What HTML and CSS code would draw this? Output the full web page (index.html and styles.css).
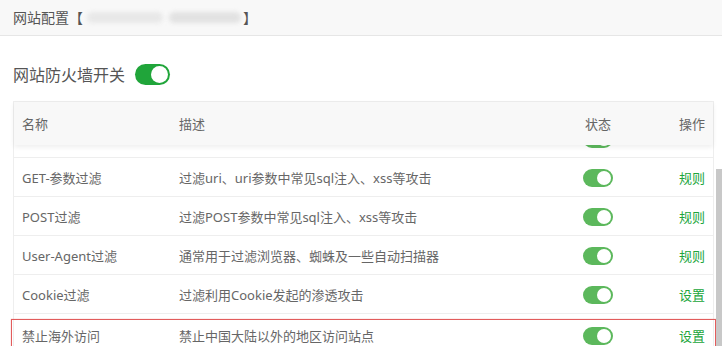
FILE: index.html
```html
<!DOCTYPE html>
<html lang="zh-CN">
<head>
<meta charset="utf-8">
<title>网站配置</title>
<link rel="stylesheet" href="styles.css">
</head>
<body>
<div class="titlebar">
  <span class="title">网站配置【</span><span class="blur"><span class="blob b1"></span><span class="blob b2"></span></span><span class="title">】</span>
</div>
<div class="content">
  <div class="master">
    <span class="master-label">网站防火墙开关</span>
    <span class="switch big"><span class="knob"></span></span>
  </div>
  <div class="tablewrap">
    <div class="table">
      <div class="thead row">
        <div class="c name">名称</div>
        <div class="c desc">描述</div>
        <div class="c status">状态</div>
        <div class="c op">操作</div>
      </div>
      <div class="tbody">
        <div class="row tr first">
          <div class="c name"></div>
          <div class="c desc"></div>
          <div class="c status"><span class="switch"><span class="knob"></span></span></div>
          <div class="c op"></div>
        </div>
        <div class="row tr">
          <div class="c name">GET-参数过滤</div>
          <div class="c desc">过滤uri、uri参数中常见sql注入、xss等攻击</div>
          <div class="c status"><span class="switch"><span class="knob"></span></span></div>
          <div class="c op"><a class="link">规则</a></div>
        </div>
        <div class="row tr">
          <div class="c name">POST过滤</div>
          <div class="c desc">过滤POST参数中常见sql注入、xss等攻击</div>
          <div class="c status"><span class="switch"><span class="knob"></span></span></div>
          <div class="c op"><a class="link">规则</a></div>
        </div>
        <div class="row tr">
          <div class="c name">User-Agent过滤</div>
          <div class="c desc">通常用于过滤浏览器、蜘蛛及一些自动扫描器</div>
          <div class="c status"><span class="switch"><span class="knob"></span></span></div>
          <div class="c op"><a class="link">规则</a></div>
        </div>
        <div class="row tr">
          <div class="c name">Cookie过滤</div>
          <div class="c desc">过滤利用Cookie发起的渗透攻击</div>
          <div class="c status"><span class="switch"><span class="knob"></span></span></div>
          <div class="c op"><a class="link">设置</a></div>
        </div>
        <div class="row tr hl">
          <div class="c name">禁止海外访问</div>
          <div class="c desc">禁止中国大陆以外的地区访问站点</div>
          <div class="c status"><span class="switch"><span class="knob"></span></span></div>
          <div class="c op"><a class="link">设置</a></div>
        </div>
      </div>
    </div>
    <div class="scrollbar"><div class="thumb"></div></div>
  </div>
</div>
</body>
</html>
```
FILE: styles.css
```css
html, body {
  margin: 0;
  padding: 0;
  height: 100%;
  overflow: hidden;
  background: #fff;
}
body {
  font-family: "Noto Sans", "Noto Sans CJK SC", sans-serif;
  color: #666;
  font-size: 13px;
}
.titlebar {
  height: 36px;
  background: #f8f8f8;
  border-bottom: 1px solid #e6e6e6;
  display: flex;
  align-items: center;
  padding-left: 13px;
  box-sizing: border-box;
}
.title {
  font-size: 14px;
  color: #555;
  line-height: 20px;
}
.blur {
  display: flex;
  align-items: center;
  gap: 6px;
  width: 155px;
  height: 14px;
  margin: 0 1px 0 4px;
}
.blob {
  height: 11px;
  border-radius: 6px;
  background: #e2e2e2;
  filter: blur(2px);
}
.b1 { width: 76px; background: #e8e8e8; }
.b2 { width: 72px; background: #e2e2e2; }
.content {
  padding-top: 27px;
}
.master {
  display: flex;
  align-items: center;
  height: 22px;
  padding-left: 13px;
}
.master-label {
  font-size: 16px;
  color: #555;
  margin-right: 10px;
}
.switch {
  display: inline-flex;
  align-items: center;
  justify-content: flex-end;
  box-sizing: border-box;
  width: 30px;
  height: 18px;
  flex: none;
  border-radius: 9px;
  background: #5cb85c;
  padding-right: 2px;
  vertical-align: middle;
}
.switch .knob {
  width: 14px;
  height: 14px;
  border-radius: 50%;
  background: #fff;
}
.switch.big {
  width: 35px;
  height: 21px;
  border-radius: 11px;
  background: #20a53a;
}
.switch.big .knob {
  width: 17px;
  height: 17px;
}
.tablewrap {
  margin-top: 16px;
  margin-left: 13px;
  display: flex;
  gap: 2px;
  height: 246px;
}
.table {
  width: 701px;
  border-left: 1px solid #eee;
  border-right: 1px solid #eee;
  border-top: 1px solid #eee;
  box-sizing: border-box;
  display: flex;
  flex-direction: column;
}
.row {
  display: grid;
  grid-template-columns: 157px 389px 76px 1fr;
  align-items: center;
}
.thead {
  height: 43px;
  flex: none;
  background: #f8f8f8;
  box-shadow: 0 2px 5px rgba(0, 0, 0, 0.07);
  position: relative;
  z-index: 1;
}
.c {
  padding-left: 8px;
  white-space: nowrap;
}
.status {
  padding-left: 0;
  text-align: center;
}
.op {
  text-align: right;
  padding-right: 8px;
}
.tbody {
  flex: 1;
  display: flex;
  flex-direction: column;
}
.tr {
  height: 39px;
  flex: none;
  border-bottom: 1px solid #eee;
  box-sizing: border-box;
}
.tr.first {
  height: 13px;
  overflow: hidden;
  align-items: start;
}
.tr.first .status {
  height: 3px;
  overflow: hidden;
  display: flex;
  justify-content: center;
  align-items: flex-end;
}
.tr.hl {
  margin: 5px -3px 0 -3px;
  padding: 0 2px 0 2px;
  height: 32px;
  border: 1px solid #e25c5c;
  box-shadow: 0 0 1px rgba(224, 90, 90, 0.6);
}
.link {
  color: #20a53a;
  text-decoration: none;
}
.scrollbar {
  width: 6px;
  padding-top: 68px;
  box-sizing: border-box;
  position: relative;
  z-index: 2;
}
.thumb {
  height: 100%;
  background: #c8c8c8;
}
```
